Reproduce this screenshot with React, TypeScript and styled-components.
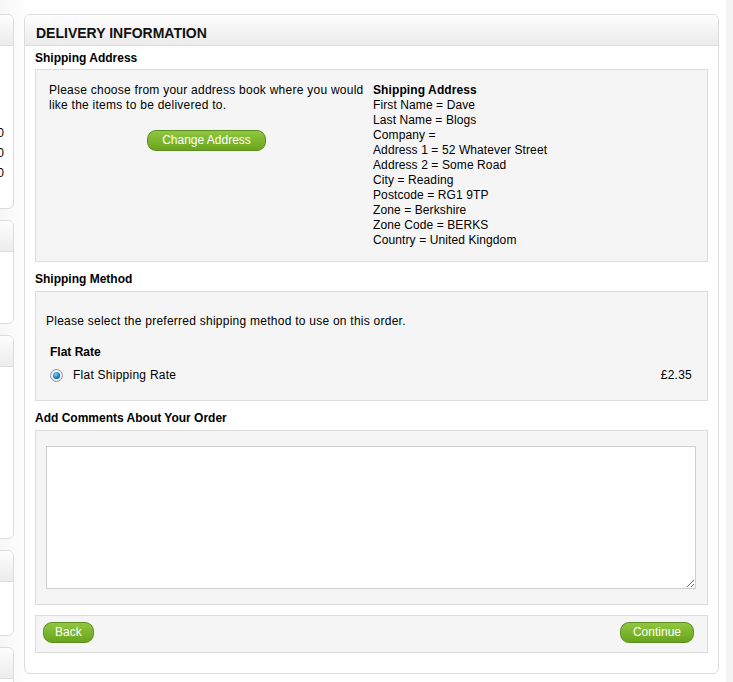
import React, { useState } from 'react';
import styled, { createGlobalStyle } from 'styled-components';

const GlobalStyle = createGlobalStyle`
  body {
    margin: 0;
    background: #f3f3f3;
    font-family: "Liberation Sans", Arial, sans-serif;
    font-size: 12px;
    color: #000;
  }
`;

const Page = styled.div`
  display: flex;
  align-items: flex-start;
  gap: 10px;
  width: 726px;
  padding-top: 14px;
  background: linear-gradient(to right, #f7f7f7, #ffffff 30px);
  min-height: 658px;
`;

const Sidebar = styled.div`
  width: 14px;
  flex-shrink: 0;
  overflow: hidden;
  display: flex;
  flex-direction: column;
  gap: 11px;
`;

const SideBox = styled.div<{ $h: number }>`
  width: 200px;
  margin-left: -186px;
  height: ${(p) => p.$h}px;
  box-sizing: border-box;
  border: 1px solid #dcdcdc;
  border-radius: 6px;
  background: #fff;
  overflow: hidden;
  flex-shrink: 0;
`;

const SideHead = styled.div`
  height: 30px;
  border-bottom: 1px solid #dcdcdc;
  background: linear-gradient(#fdfdfd, #ececec);
`;

const SideList = styled.div`
  padding: 77px 9px 0 0;
  text-align: right;
  line-height: 20px;
`;

const Panel = styled.div`
  width: 695px;
  box-sizing: border-box;
  border: 1px solid #dcdcdc;
  border-radius: 6px;
  background: #fff;
  overflow: hidden;
  flex-shrink: 0;
`;

const PanelHead = styled.div`
  height: 31px;
  border-bottom: 1px solid #dcdcdc;
  background: linear-gradient(#fefefe, #ebebeb);
  display: flex;
  align-items: center;
  padding: 5px 0 0 11px;
  box-sizing: border-box;
`;

const Title = styled.h2`
  margin: 0;
  font-size: 14px;
  font-weight: bold;
  color: #111;
`;

const PanelBody = styled.div`
  padding: 0 10px 20px;
`;

const Heading = styled.h3<{ $first?: boolean }>`
  margin: ${(p) => (p.$first ? '5px 0 4px' : '10px 0 5px')};
  font-size: 12px;
  line-height: 14px;
  font-weight: bold;
`;

const Box = styled.div`
  background: #f5f5f5;
  border: 1px solid #dcdcdc;
`;

const AddressBox = styled(Box)`
  display: flex;
  padding: 13px 0 13px 13px;
  line-height: 15px;
`;

const ChooseCol = styled.div`
  width: 315px;
  padding-right: 9px;
  display: flex;
  flex-direction: column;
  align-items: center;
`;

const ChooseText = styled.p`
  margin: 0;
  align-self: stretch;
  letter-spacing: 0.25px;
`;

const AddressCol = styled.div`
  display: flex;
  flex-direction: column;
  letter-spacing: 0.1px;
`;

const Strong = styled.span`
  font-weight: bold;
`;

const GreenButton = styled.button<{ $top?: number; $pad?: number }>`
  margin-top: ${(p) => p.$top ?? 0}px;
  height: 21px;
  padding: 0 ${(p) => p.$pad ?? 11}px;
  border: 1px solid #5a8e20;
  border-radius: 9px;
  background: linear-gradient(#8fc840, #6aa41c);
  color: #fff;
  font-family: "Liberation Sans", Arial, sans-serif;
  font-size: 12px;
  line-height: 19px;
  cursor: pointer;
`;

const MethodBox = styled(Box)`
  padding: 22px 15px 17px 10px;
  line-height: 15px;
  letter-spacing: 0.25px;
`;

const MethodName = styled.div`
  font-weight: bold;
  letter-spacing: 0;
  margin: 16px 0 8px 4px;
`;

const RateRow = styled.label`
  display: flex;
  align-items: center;
  padding-left: 4px;
  cursor: pointer;
`;

const Radio = styled.span`
  width: 11px;
  height: 11px;
  border-radius: 50%;
  border: 1px solid #8a9aa8;
  background: radial-gradient(circle at 50% 40%, #fff, #d9dfe5);
  display: flex;
  align-items: center;
  justify-content: center;
  margin-right: 10px;
`;

const RadioDot = styled.span`
  width: 7px;
  height: 7px;
  border-radius: 50%;
  background: radial-gradient(circle at 40% 35%, #7fd0ff, #1a6fb0 60%, #0b4a80);
`;

const RateName = styled.span`
  flex: 1;
`;

const CommentBox = styled(Box)`
  padding: 15px 11px 15px 10px;
`;

const Comment = styled.textarea`
  display: block;
  width: 100%;
  height: 143px;
  box-sizing: border-box;
  border: 1px solid #cfcfcf;
  background: #fff;
  font-family: "Liberation Sans", Arial, sans-serif;
  font-size: 12px;
  outline: none;
`;

const ButtonBar = styled(Box)`
  margin-top: 10px;
  display: flex;
  justify-content: space-between;
  padding: 6px 13px 9px 7px;
`;

const addressLines = [
  'First Name = Dave',
  'Last Name = Blogs',
  'Company =',
  'Address 1 = 52 Whatever Street',
  'Address 2 = Some Road',
  'City = Reading',
  'Postcode = RG1 9TP',
  'Zone = Berkshire',
  'Zone Code = BERKS',
  'Country = United Kingdom',
];

export default function App() {
  const [comments, setComments] = useState('');

  return (
    <>
      <GlobalStyle />
      <Page>
        <Sidebar>
          <SideBox $h={195}>
            <SideHead />
            <SideList>
              <div>£0.00</div>
              <div>£0.00</div>
              <div>£0.00</div>
            </SideList>
          </SideBox>
          <SideBox $h={104}>
            <SideHead />
          </SideBox>
          <SideBox $h={204}>
            <SideHead />
          </SideBox>
          <SideBox $h={86}>
            <SideHead />
          </SideBox>
          <SideBox $h={60}>
            <SideHead />
          </SideBox>
        </Sidebar>

        <Panel>
          <PanelHead>
            <Title>DELIVERY INFORMATION</Title>
          </PanelHead>
          <PanelBody>
            <Heading $first>Shipping Address</Heading>
            <AddressBox>
              <ChooseCol>
                <ChooseText>
                  Please choose from your address book where you would like the items to be delivered to.
                </ChooseText>
                <GreenButton $top={17} $pad={14}>Change Address</GreenButton>
              </ChooseCol>
              <AddressCol>
                <Strong>Shipping Address</Strong>
                {addressLines.map((line) => (
                  <span key={line}>{line}</span>
                ))}
              </AddressCol>
            </AddressBox>

            <Heading>Shipping Method</Heading>
            <MethodBox>
              <div>Please select the preferred shipping method to use on this order.</div>
              <MethodName>Flat Rate</MethodName>
              <RateRow>
                <Radio>
                  <RadioDot />
                </Radio>
                <RateName>Flat Shipping Rate</RateName>
                <span>£2.35</span>
              </RateRow>
            </MethodBox>

            <Heading>Add Comments About Your Order</Heading>
            <CommentBox>
              <Comment value={comments} onChange={(e) => setComments(e.target.value)} />
            </CommentBox>

            <ButtonBar>
              <GreenButton>Back</GreenButton>
              <GreenButton $pad={12}>Continue</GreenButton>
            </ButtonBar>
          </PanelBody>
        </Panel>
      </Page>
    </>
  );
}
